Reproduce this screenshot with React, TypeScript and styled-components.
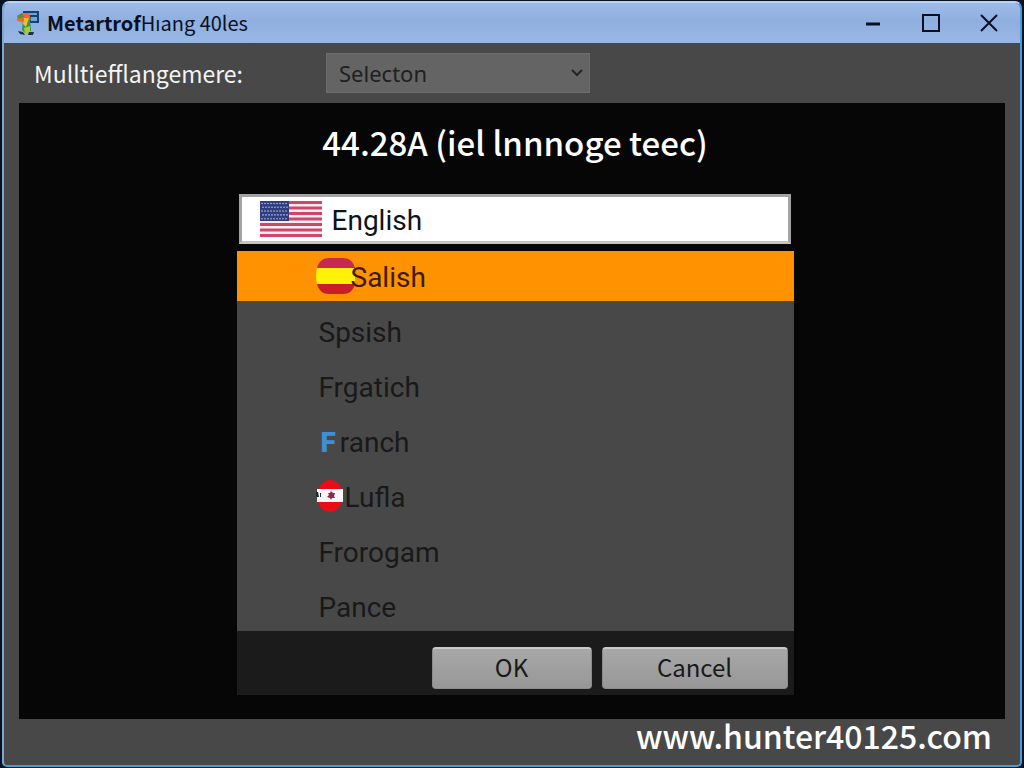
import React from 'react';
import styled, { createGlobalStyle, css } from 'styled-components';

const sans = '"Noto Sans", "Open Sans", sans-serif';
const grotesk = '"Noto Sans CJK SC", "Noto Sans", sans-serif';
const listFont = 'Roboto, "Noto Sans", sans-serif';

const GlobalStyle = createGlobalStyle`
  * { box-sizing: border-box; }
  body { margin: 0; background: #071226; font-family: ${sans}; }
  button, select { font: inherit; }
`;

const Desktop = styled.div`
  display: flex;
  min-height: 100vh;
  padding: 1px 2px 2px;
`;

const Window = styled.div`
  flex: 1;
  display: flex;
  flex-direction: column;
  min-width: 0;
  border: 2px solid #4a9bd0;
  border-top-color: #b9d3f5;
  border-left-color: #7fa9cc;
  border-radius: 7px 7px 5px 5px;
  background: #484848;
  overflow: hidden;
`;

const TitleBar = styled.header`
  display: flex;
  align-items: center;
  height: 40px;
  padding: 0 2px 0 12px;
  background: linear-gradient(#9dbbe8, #8fafdf 45%, #98b7e4);
  color: #0a1024;
`;

const WindowTitle = styled.h1`
  flex: 1;
  margin: 0 0 0 7px;
  font-family: ${grotesk};
  font-size: 20px;
  line-height: 32px;
  font-weight: 400;
  white-space: nowrap;
  b { font-weight: 700; }
`;

const CaptionButton = styled.button`
  display: grid;
  place-items: center;
  width: 58px;
  height: 38px;
  padding: 0;
  border: 0;
  background: none;
  color: inherit;
`;

const Toolbar = styled.div`
  display: flex;
  align-items: center;
  height: 60px;
  padding: 0 30px;
`;

const FieldLabel = styled.label`
  flex: 0 0 292px;
  font-family: ${grotesk};
  font-size: 23px;
  line-height: 32px;
  color: #f4f4f4;
`;

const SelectWrap = styled.div`
  position: relative;
  width: 264px;
  svg { position: absolute; right: 6px; top: 14px; pointer-events: none; }
`;

const Select = styled.select`
  appearance: none;
  display: block;
  width: 100%;
  height: 40px;
  padding: 0 30px 0 12px;
  border: 1px solid #6c6c6c;
  border-radius: 0;
  background: #646464;
  color: #202020;
  font-size: 22px;
`;

const Stage = styled.main`
  flex: 1;
  display: flex;
  flex-direction: column;
  align-items: center;
  margin: 0 15px;
  padding: 15px 0 24px 6px;
  background: #060606;
`;

const Heading = styled.h2`
  margin: 0 0 28px;
  font-family: ${grotesk};
  font-size: 33px;
  line-height: 48px;
  font-weight: 500;
  color: #fff;
`;

const Dialog = styled.section`
  width: 100%;
  max-width: 557px;
  font-family: ${grotesk};
`;

const rowText = css`
  font-family: ${listFont};
  font-size: 28px;
  line-height: 40px;
  text-align: left;
`;

const CurrentLanguage = styled.button`
  ${rowText}
  display: flex;
  align-items: center;
  gap: 10px;
  width: calc(100% - 5px);
  height: 50px;
  margin: 0 3px 7px 2px;
  padding: 0 18px;
  border: 3px solid #a3a3a3;
  border-bottom-color: #c4c4c4;
  background: #fff;
  color: #0c1418;
`;

const Options = styled.div`
  background: #484848;
`;

const OptionGroup = styled.div`
  display: grid;
  gap: 5px;
  padding-top: 5px;
`;

const Option = styled.button<{ $selected?: boolean }>`
  ${rowText}
  display: flex;
  align-items: center;
  width: 100%;
  height: 50px;
  padding: 0 0 0 ${p => (p.$selected ? 79 : 82)}px;
  border: 0;
  background: ${p => (p.$selected ? '#ff9200' : 'transparent')};
  color: ${p => (p.$selected ? '#401a08' : '#191919')};
`;

const RowLabel = styled.span`
  padding-top: 4px;
`;

const SpainFlag = styled.svg`
  margin-right: -5px;
`;

const RoundFlag = styled.svg`
  margin: 0 1px 0 -3px;
`;

const Initial = styled.b`
  padding: 0 4px 0 2px;
  font-weight: 900;
  color: #3f8fd6;
`;

const DialogFooter = styled.div`
  display: flex;
  justify-content: flex-end;
  gap: 10px;
  padding: 16px 6px 6px;
  background: #1b1b1b;
`;

const ActionButton = styled.button<{ $wide?: boolean }>`
  width: ${p => (p.$wide ? 186 : 160)}px;
  height: 42px;
  padding: 0 0 4px;
  border: 1px solid #8b8b8b;
  border-top: 2px solid #c9c9c9;
  border-radius: 4px;
  background: linear-gradient(#a8a8a8, #979797);
  color: #17191b;
  font-size: 24px;
  line-height: 32px;
`;

const SiteBar = styled.footer`
  display: flex;
  justify-content: flex-end;
  height: 46px;
  padding: 0 28px;
`;

const SiteLink = styled.a`
  font-family: ${grotesk};
  font-size: 32px;
  line-height: 32px;
  font-weight: 500;
  color: #fff;
  text-decoration: none;
`;

const AppIcon = () => (
  <svg width="24" height="26" viewBox="0 0 24 26" aria-hidden="true">
    <path d="M7 1H23V13H14V6H7Z" fill="#173f70" />
    <path d="M12 3H21V5H12ZM15 7H21V11H15Z" fill="#6ea5d7" />
    <path d="M1 6L6 3L13 3L15 10L10 10L6 12L1 11Z" fill="#f3672a" />
    <path d="M1 6L6 3L8 7L3 9Z" fill="#5a8f38" />
    <path d="M7 9L14 8L15 21L9 23L6 20Z" fill="#2b9855" />
    <path d="M8 8L13 8L10 17L7 14Z" fill="#f7ba2b" />
    <path d="M8 18L14 16L14 22L9 24Z" fill="#b5c52b" />
    <path d="M2 21L7 22L9 25L4 24ZM13 22H18L17 25H12Z" fill="#1c3145" />
  </svg>
);

const UsFlag = () => (
  <svg width="62" height="36" viewBox="0 0 62 36" aria-hidden="true">
    <rect width="62" height="36" fill="#f7eef4" />
    {[0, 1, 2, 3, 4, 5, 6].map(i => (
      <rect key={i} y={i * 5.5} width="62" height="3" fill="#cf4668" />
    ))}
    <rect width="29" height="20" fill="#303e80" />
    {Array.from({ length: 45 }, (_, i) => (
      <circle
        key={i}
        cx={2 + (i % 9) * 3 + (Math.floor(i / 9) % 2)}
        cy={2.5 + Math.floor(i / 9) * 3.8}
        r="0.8"
        fill="#b6bddf"
      />
    ))}
  </svg>
);

const others = ['Spsish', 'Frgatich', 'Franch', 'Lufla', 'Frorogam', 'Pance'];

function OptionContent({ name }: { name: string }) {
  if (name === 'Franch') {
    return <RowLabel><Initial>F</Initial>ranch</RowLabel>;
  }
  if (name === 'Lufla') {
    return (
      <>
        <RoundFlag width="28" height="32" viewBox="0 0 28 32" aria-hidden="true">
          <ellipse cx="14" cy="16" rx="13" ry="16" fill="#e90d16" />
          <path d="M1 9H27V22H1Z" fill="#faf5f7" />
          <path d="M15 11L17 13H19L18 16L19 18L16 18L15 20L14 18L11 17L13 15L12 13H14Z" fill="#8e294c" />
          <path d="M0 12H2L3 17H0ZM4 13H5V17H4Z" fill="#242630" />
        </RoundFlag>
        <RowLabel>{name}</RowLabel>
      </>
    );
  }
  return <RowLabel>{name}</RowLabel>;
}

export default function App() {
  return (
    <>
      <GlobalStyle />
      <Desktop>
        <Window>
          <TitleBar>
            <AppIcon />
            <WindowTitle><b>Metartrof</b>Hıang 40les</WindowTitle>
            <CaptionButton aria-label="Minimize">
              <svg width="16" height="20" aria-hidden="true"><path d="M1 11H15" stroke="currentColor" strokeWidth="3" /></svg>
            </CaptionButton>
            <CaptionButton aria-label="Maximize">
              <svg width="20" height="20" aria-hidden="true"><rect x="2" y="2" width="16" height="16" fill="none" stroke="currentColor" strokeWidth="2" /></svg>
            </CaptionButton>
            <CaptionButton aria-label="Close">
              <svg width="20" height="20" aria-hidden="true"><path d="M2 2L18 18M18 2L2 18" stroke="currentColor" strokeWidth="2" /></svg>
            </CaptionButton>
          </TitleBar>
          <Toolbar>
            <FieldLabel htmlFor="selection">Mulltiefflangemere:</FieldLabel>
            <SelectWrap>
              <Select id="selection"><option>Selecton</option></Select>
              <svg width="14" height="12" aria-hidden="true"><path d="M2 3L7 8L12 3" fill="none" stroke="#252525" strokeWidth="2" /></svg>
            </SelectWrap>
          </Toolbar>
          <Stage>
            <Heading>44.28A (iel lnnnoge teec)</Heading>
            <Dialog>
              <CurrentLanguage><UsFlag /><RowLabel>English</RowLabel></CurrentLanguage>
              <Options>
                <Option $selected>
                  <SpainFlag width="40" height="36" viewBox="0 0 40 36" aria-hidden="true">
                    <path d="M1 10C3 3 7 0 13 0H27C33 0 37 3 39 10Z" fill="#c52a50" />
                    <path d="M1 26C3 33 7 36 13 36H27C33 36 37 33 39 26Z" fill="#cb1c29" />
                    <path d="M1 10H39V26H1Q-1 18 1 10Z" fill="#fff10a" />
                  </SpainFlag>
                  <RowLabel>Salish</RowLabel>
                </Option>
                <OptionGroup>
                  {others.map(name => (
                    <Option key={name}><OptionContent name={name} /></Option>
                  ))}
                </OptionGroup>
              </Options>
              <DialogFooter>
                <ActionButton>OK</ActionButton>
                <ActionButton $wide>Cancel</ActionButton>
              </DialogFooter>
            </Dialog>
          </Stage>
          <SiteBar><SiteLink href="#">www.hunter40125.com</SiteLink></SiteBar>
        </Window>
      </Desktop>
    </>
  );
}
